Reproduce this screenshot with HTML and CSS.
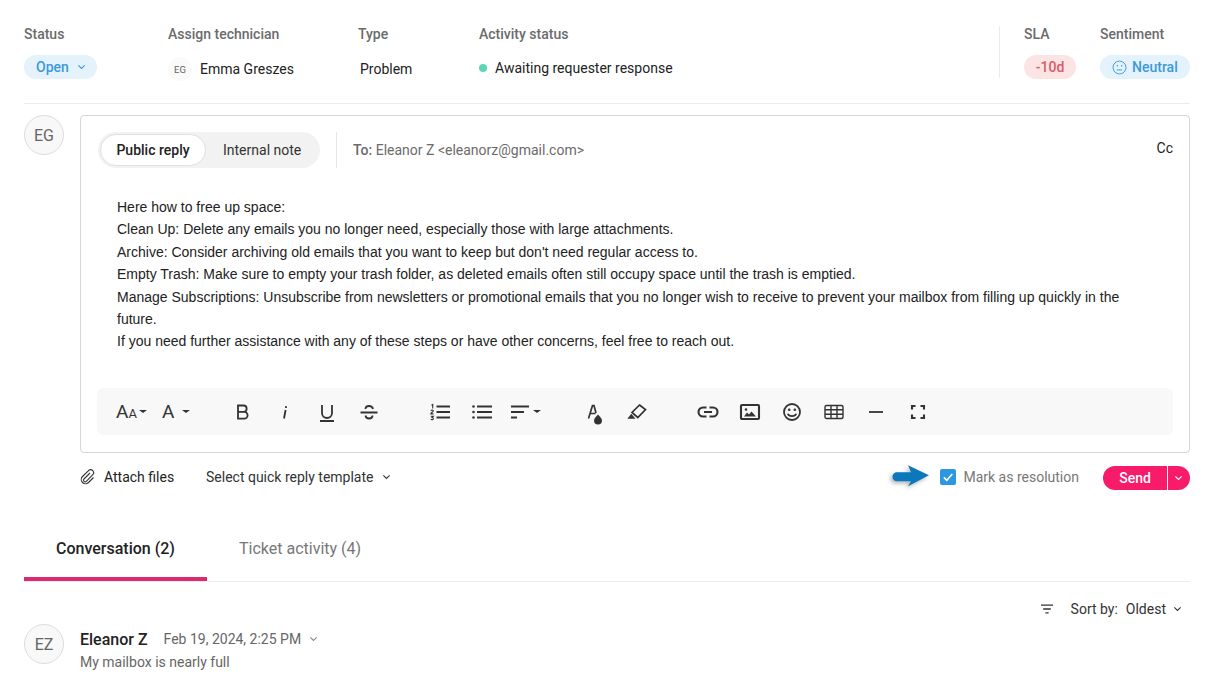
FILE: index.html
```html
<!DOCTYPE html>
<html lang="en">
<head>
<meta charset="utf-8">
<title>Ticket reply</title>
<link rel="stylesheet" href="styles.css">
</head>
<body>
<main class="page">
  <section class="props">
    <div class="prop prop-status">
      <div class="label">Status</div>
      <div class="pill pill-open">Open <svg class="chev" viewBox="0 0 10 6"><path d="M1.5 1.2 5 4.6l3.5-3.4"/></svg></div>
    </div>
    <div class="prop prop-assign">
      <div class="label">Assign technician</div>
      <div class="value"><span class="mini-avatar">EG</span>Emma Greszes</div>
    </div>
    <div class="prop prop-type">
      <div class="label">Type</div>
      <div class="value value-type">Problem</div>
    </div>
    <div class="prop prop-activity">
      <div class="label">Activity status</div>
      <div class="value"><span class="dot"></span>Awaiting requester response</div>
    </div>
    <div class="prop prop-sla">
      <div class="label">SLA</div>
      <div class="pill pill-sla">-10d</div>
    </div>
    <div class="prop">
      <div class="label">Sentiment</div>
      <div class="pill pill-neutral">
        <svg class="face" viewBox="0 0 16 16"><circle cx="8" cy="8" r="6.9"/><path d="M5.2 10.6h5.6"/><circle class="eye" cx="5.7" cy="6.2" r=".8"/><circle class="eye" cx="10.3" cy="6.2" r=".8"/></svg>Neutral
      </div>
    </div>
  </section>

  <section class="composer">
    <div class="avatar">EG</div>
    <div class="composer-main">
      <div class="editor">
        <div class="editor-head">
          <div class="switch">
            <span class="switch-on">Public reply</span>
            <span class="switch-off">Internal note</span>
          </div>
          <div class="to"><b>To:</b> Eleanor Z &lt;eleanorz@gmail.com&gt;</div>
          <div class="cc">Cc</div>
        </div>
        <div class="body-text">
          <p>Here how to free up space:</p>
          <p>Clean Up: Delete any emails you no longer need, especially those with large attachments.</p>
          <p>Archive: Consider archiving old emails that you want to keep but don't need regular access to.</p>
          <p>Empty Trash: Make sure to empty your trash folder, as deleted emails often still occupy space until the trash is emptied.</p>
          <p>Manage Subscriptions: Unsubscribe from newsletters or promotional emails that you no longer wish to receive to prevent your mailbox from filling up quickly in the future.</p>
          <p>If you need further assistance with any of these steps or have other concerns, feel free to reach out.</p>
        </div>
        <div class="toolbar">
          <div class="tool-group">
            <span class="tool tool-text tool-size"><span class="aa-big">A</span><span class="aa-small">A</span><i class="caret"></i></span>
            <span class="tool tool-text tool-font"><span class="aa-big">A</span><i class="caret caret-wide"></i></span>
          </div>
          <div class="tool-group">
            <span class="tool"><svg class="ic" viewBox="0 0 20 20"><path d="M5 3.5h5.500a3.100 3.100 0 0 1 0 6.300H5zM5 9.800h6.200a3.400 3.400 0 0 1 0 6.800H5z"/></svg></span>
            <span class="tool"><svg class="ic" viewBox="0 0 20 20"><path d="M10.600 8 9 16.500M11.100 4.200 10.900 6"/></svg></span>
            <span class="tool"><svg class="ic" viewBox="0 0 20 20"><path d="M5 3v8a5 5 0 0 0 10 0V3M3 19h14"/></svg></span>
            <span class="tool"><svg class="ic" viewBox="0 0 20 20"><path d="M1.500 10.500h17M14 7C13.500 5 12 4 10 4 8 4 6.500 5 6.500 7M6.500 13.500c.3 2 1.800 3 3.500 3s3.500-1 3.500-3"/></svg></span>
          </div>
          <div class="tool-group">
            <span class="tool"><svg class="ic" viewBox="0 0 20 20"><path class="thick" d="M6.500 4.500H20M6.500 10H20M6.500 15.500H20"/><path class="thin" d="M1.500 3.200 2.700 2.500V6.500M.8 8.700c.5-1 2.500-1 2.500.2 0 1-2.500 1.800-2.500 3h2.700M.8 14.200h2.500l-1.200 1.200c1.500 0 1.700 2.300 0 2.300-.6 0-1.100-.2-1.300-.6"/></svg></span>
            <span class="tool"><svg class="ic" viewBox="0 0 20 20"><path class="thick" d="M5 4.500H20M5 10H20M5 15.500H20"/><circle class="fill" cx="1.500" cy="4.500" r="1.300"/><circle class="fill" cx="1.500" cy="10" r="1.300"/><circle class="fill" cx="1.500" cy="15.500" r="1.300"/></svg></span>
            <span class="tool tool-align"><svg class="ic" viewBox="0 0 20 20"><path class="thick" d="M1 4.500h18M1 10h13M1 15.500h6"/></svg><i class="caret"></i></span>
          </div>
          <div class="tool-group">
            <span class="tool"><svg class="ic" viewBox="0 0 20 20"><path class="mid" d="M3.500 16.500 7.500 3.500h1.500l2 7.500M5 11.500h5.500"/><path class="fill" d="M13 12.500c1.200 1.800 4 3.600 4 6a4 4 0 0 1-8 0c0-2.400 2.800-4.200 4-6z"/></svg></span>
            <span class="tool"><svg class="ic" viewBox="0 0 20 20"><path class="mid" d="M12.500 3 18.500 7.500 10.800 15.500 5 10.500z"/><path class="fill" d="M.3 16.800 4.300 11.800 8.500 16.800z"/></svg></span>
          </div>
          <div class="tool-group">
            <span class="tool"><svg class="ic ic-heavy" viewBox="0 0 20 20"><path d="M8.500 5.500H5a4.500 4.500 0 0 0 0 9h3.500M11.500 5.500H15a4.500 4.500 0 0 1 0 9h-3.500M6 10h8"/></svg></span>
            <span class="tool"><svg class="ic ic-heavy" viewBox="0 0 20 20"><rect x="1" y="3" width="18" height="14" rx="1"/><circle class="fill" cx="6" cy="7.500" r="1.300"/><path class="fill" d="M4 14.500 7 10.500 9 12.500 11.500 9.500 16 14.500z"/></svg></span>
            <span class="tool"><svg class="ic" viewBox="0 0 20 20"><circle cx="10" cy="10" r="8"/><circle class="fill" cx="7.200" cy="7.800" r="1.300"/><circle class="fill" cx="12.800" cy="7.800" r="1.300"/><path d="M5.800 11.800c1 3.200 7.400 3.200 8.400 0"/></svg></span>
            <span class="tool"><svg class="ic ic-table" viewBox="0 0 20 20"><rect x="1" y="3.500" width="18" height="13" rx="1.500"/><path d="M1 7.800h18M1 12.200h18M7 3.500v13M13 3.500v13"/></svg></span>
            <span class="tool"><svg class="ic" viewBox="0 0 20 20"><path d="M3 10h14"/></svg></span>
            <span class="tool"><svg class="ic ic-heavy" viewBox="0 0 20 20"><path d="M4 7.500V4h3.500M12.500 4H16v3.500M16 12.500V16h-3.500M7.500 16H4v-3.500"/></svg></span>
          </div>
        </div>
      </div>
      <div class="actions">
        <div class="attach"><svg class="clip" viewBox="0 0 16 16"><path d="M10 4 4 10a1.600 1.600 0 0 0 2.300 2.300L13 5.500a3 3 0 0 0-4.200-4.200L2.500 7.500a4.200 4.200 0 0 0 6 6l5-5"/></svg>Attach files</div>
        <div class="template">Select quick reply template <svg class="chev chev-dark" viewBox="0 0 10 6"><path d="M1.500 1.200 5 4.600l3.500-3.400"/></svg></div>
        <div class="arrow-wrap"><svg class="arrow" viewBox="0 0 40 24"><path d="M7 8.300H21L18 1.300 39 11.300 18 22.300 21 17.300H7a4.500 4.500 0 0 1 0-9z"/></svg></div>
        <label class="resolution"><span class="check"><svg viewBox="0 0 16 16"><path d="M3.800 8.400 6.800 11.300 12.300 5"/></svg></span>Mark as resolution</label>
        <div class="send"><span class="send-main">Send</span><span class="send-more"><svg class="chev chev-white" viewBox="0 0 10 6"><path d="M1.500 1.200 5 4.600l3.500-3.400"/></svg></span></div>
      </div>
    </div>
  </section>

  <nav class="tabs">
    <span class="tab tab-active">Conversation (2)</span>
    <span class="tab">Ticket activity (4)</span>
  </nav>

  <div class="sort">
    <svg class="filter" viewBox="0 0 14 10"><path d="M1 1.200h12M3.200 5h7.600M5.400 8.800h3.200"/></svg>
    <span class="sort-label">Sort by:</span><span class="sort-value">Oldest</span>
    <svg class="chev chev-dark" viewBox="0 0 10 6"><path d="M1.500 1.200 5 4.600l3.500-3.400"/></svg>
  </div>

  <article class="message">
    <div class="avatar">EZ</div>
    <div class="message-main">
      <div class="message-head">
        <span class="author">Eleanor Z</span>
        <span class="date">Feb 19, 2024, 2:25 PM</span>
        <svg class="chev chev-grey" viewBox="0 0 10 6"><path d="M1.500 1.200 5 4.600l3.500-3.400"/></svg>
      </div>
      <div class="subject">My mailbox is nearly full</div>
    </div>
  </article>
</main>
</body>
</html>
```
FILE: styles.css
```css
* { box-sizing: border-box; }
html, body { margin: 0; height: 100%; overflow: hidden; background: #fff; }
body { font-family: Roboto, "Liberation Sans", sans-serif; font-size: 14px; color: #222; }
.page { padding: 26px 23px 0 24px; }

.props { display: flex; height: 78px; border-bottom: 1px solid #ececec; }
.prop { display: flex; flex-direction: column; align-items: flex-start; }
.label { font-weight: 500; font-size: 14px; line-height: 16px; color: #6b6b6b; }
.prop-status { width: 144px; }
.prop-assign { width: 190px; }
.prop-type { width: 121px; }
.prop-activity { width: 521px; height: 52px; margin-right: 24px; border-right: 1px solid #ececec; }
.prop-sla { width: 76px; }
.pill { display: inline-flex; align-items: center; height: 24px; margin-top: 13px; border-radius: 12px; font-weight: 500; }
.pill-open { width: 73px; padding-left: 12px; gap: 8px; background: #e4f2fc; color: #3b9ad9; }
.pill-sla { width: 52px; justify-content: center; background: #fce4e4; color: #dc5a64; }
.pill-neutral { width: 90px; padding-left: 12px; gap: 5px; background: #e4f2fc; color: #3b9ad9; }
.chev { width: 9px; height: 6px; fill: none; stroke: #3b9ad9; stroke-width: 1.2; }
.chev-dark { stroke: #333; }
.chev-grey { stroke: #888; }
.chev-white { stroke: #fff; }
.face { width: 15px; height: 15px; fill: none; stroke: #3b9ad9; stroke-width: 1; }
.face .eye { fill: #3b9ad9; stroke: none; }

.value { display: flex; align-items: center; height: 24px; margin-top: 15px; color: #222; }
.value-type { padding-left: 2px; }
.mini-avatar { display: inline-flex; align-items: center; justify-content: center; width: 24px; height: 24px; margin-right: 8px; border-radius: 50%; background: #fafafa; font-size: 9.5px; color: #666; }
.dot { width: 8px; height: 8px; margin-right: 8px; border-radius: 50%; background: #5cd6b8; }

.composer { display: flex; gap: 16px; margin-top: 11px; }
.avatar { flex: none; display: flex; align-items: center; justify-content: center; width: 40px; height: 40px; border: 1px solid #ddd; border-radius: 50%; background: #f8f8f8; font-size: 16px; color: #666; }
.composer-main { flex: 1; min-width: 0; }
.editor { height: 338px; padding: 16px 16px 17px; border: 1px solid #d6d6d6; border-radius: 4px; }
.editor-head { display: flex; align-items: center; height: 36px; }
.switch { display: flex; align-items: center; width: 222px; height: 36px; margin-left: 1px; border-radius: 18px; background: #f2f2f2; }
.switch-on { display: flex; align-items: center; justify-content: center; width: 106px; height: 32px; margin-left: 2px; border: 1px solid #e0e0e0; border-radius: 16px; background: #fff; font-weight: 500; color: #222; }
.switch-off { padding-left: 17px; color: #333; }
.to { height: 36px; line-height: 36px; margin-left: 16px; padding-left: 16px; border-left: 1px solid #e6e6e6; color: #6b6b6b; font-size: 14px; }
.to b { font-weight: 500; }
.cc { margin-left: auto; margin-top: -4px; color: #222; }

.body-text { height: 220px; padding: 28px 20px 0 20px; font-family: "Liberation Sans", Arial, sans-serif; font-size: 14px; line-height: 22.4px; color: #222; }
.body-text p { margin: 0; }

.toolbar { display: flex; gap: 29px; height: 47px; padding-left: 9px; border-radius: 6px; background: #f8f8f8; }
.tool-group { display: flex; }
.tool-group:nth-child(2) { margin-left: 3px; }
.tool { display: flex; align-items: center; justify-content: center; width: 42px; height: 47px; color: #333; }
.ic { width: 20px; height: 20px; overflow: visible; fill: none; stroke: #333; stroke-width: 1.8; }
.ic .thick { stroke-width: 2; }
.ic .thin { stroke-width: 1.1; }
.ic .mid { stroke-width: 1.7; }
.ic .fill { fill: #333; stroke: none; }
.ic-heavy { stroke-width: 2.1; }
.ic-table { stroke-width: 1.4; }
.tool-text { justify-content: flex-start; color: #333; }
.tool-size { padding-left: 10px; }
.tool-font { padding-left: 14px; }
.aa-big { font-size: 19px; }
.aa-small { font-size: 13px; margin-top: 4px; }
.caret { flex: none; display: block; width: 0; height: 0; margin-left: 2px; border-left: 4px solid transparent; border-right: 4px solid transparent; border-top: 3.5px solid #333; }
.caret-wide { margin-left: 8px; }
.tool-align { justify-content: flex-start; padding-left: 7px; }
.tool-align .ic { flex: none; }
.tool-align .caret { margin-left: 3px; }

.actions { display: flex; align-items: center; height: 48px; }
.attach { display: flex; align-items: center; width: 126px; gap: 8px; color: #222; }
.clip { width: 16px; height: 16px; fill: none; stroke: #333; stroke-width: 1.1; }
.template { display: flex; align-items: center; gap: 8px; color: #333; }
.arrow-wrap { display: flex; margin-left: auto; margin-right: 10px; margin-bottom: 2px; }
.arrow { width: 40px; height: 24px; fill: #0b78bb; filter: drop-shadow(-2px 2px 2px rgba(0,0,0,.3)); }
.resolution { display: flex; align-items: center; gap: 7px; margin-right: 24px; color: #777; }
.check { display: flex; width: 16px; height: 16px; border-radius: 2px; background: #2c98e2; }
.check svg { width: 16px; height: 16px; fill: none; stroke: #fff; stroke-width: 1.6; }
.send { display: flex; align-items: center; height: 24px; margin-top: 2px; border-radius: 12px; overflow: hidden; background: #f71b69; color: #fff; font-weight: 500; }
.send-main { display: flex; align-items: center; justify-content: center; width: 65px; height: 24px; border-right: 1px solid #fff; }
.send-more { display: flex; align-items: center; justify-content: center; width: 22px; height: 24px; padding-right: 2px; }

.tabs { display: flex; height: 81px; padding-top: 29px; border-bottom: 1px solid #ececec; }
.tab { height: 51px; font-size: 16px; line-height: 38px; color: #777; }
.tab-active { width: 183px; padding-left: 32px; border-bottom: 4px solid #dc2a70; font-weight: 500; color: #222; }
.tab:not(.tab-active) { margin-left: 32px; }

.sort { display: flex; align-items: center; justify-content: flex-end; height: 20px; margin-top: 17px; padding-right: 8px; color: #333; }
.filter { width: 14px; height: 10px; margin-right: 17px; fill: none; stroke: #333; stroke-width: 1.3; }
.sort-value { margin-left: 8px; margin-right: 7px; }

.message { display: flex; gap: 16px; margin-top: 5px; }
.message-head { display: flex; align-items: center; height: 20px; margin-top: 5px; }
.author { font-size: 16px; font-weight: 500; color: #222; }
.date { margin-left: 16px; font-size: 14px; color: #666; }
.chev-grey { margin-left: 8px; }
.subject { margin-top: 5px; color: #666; }
```
